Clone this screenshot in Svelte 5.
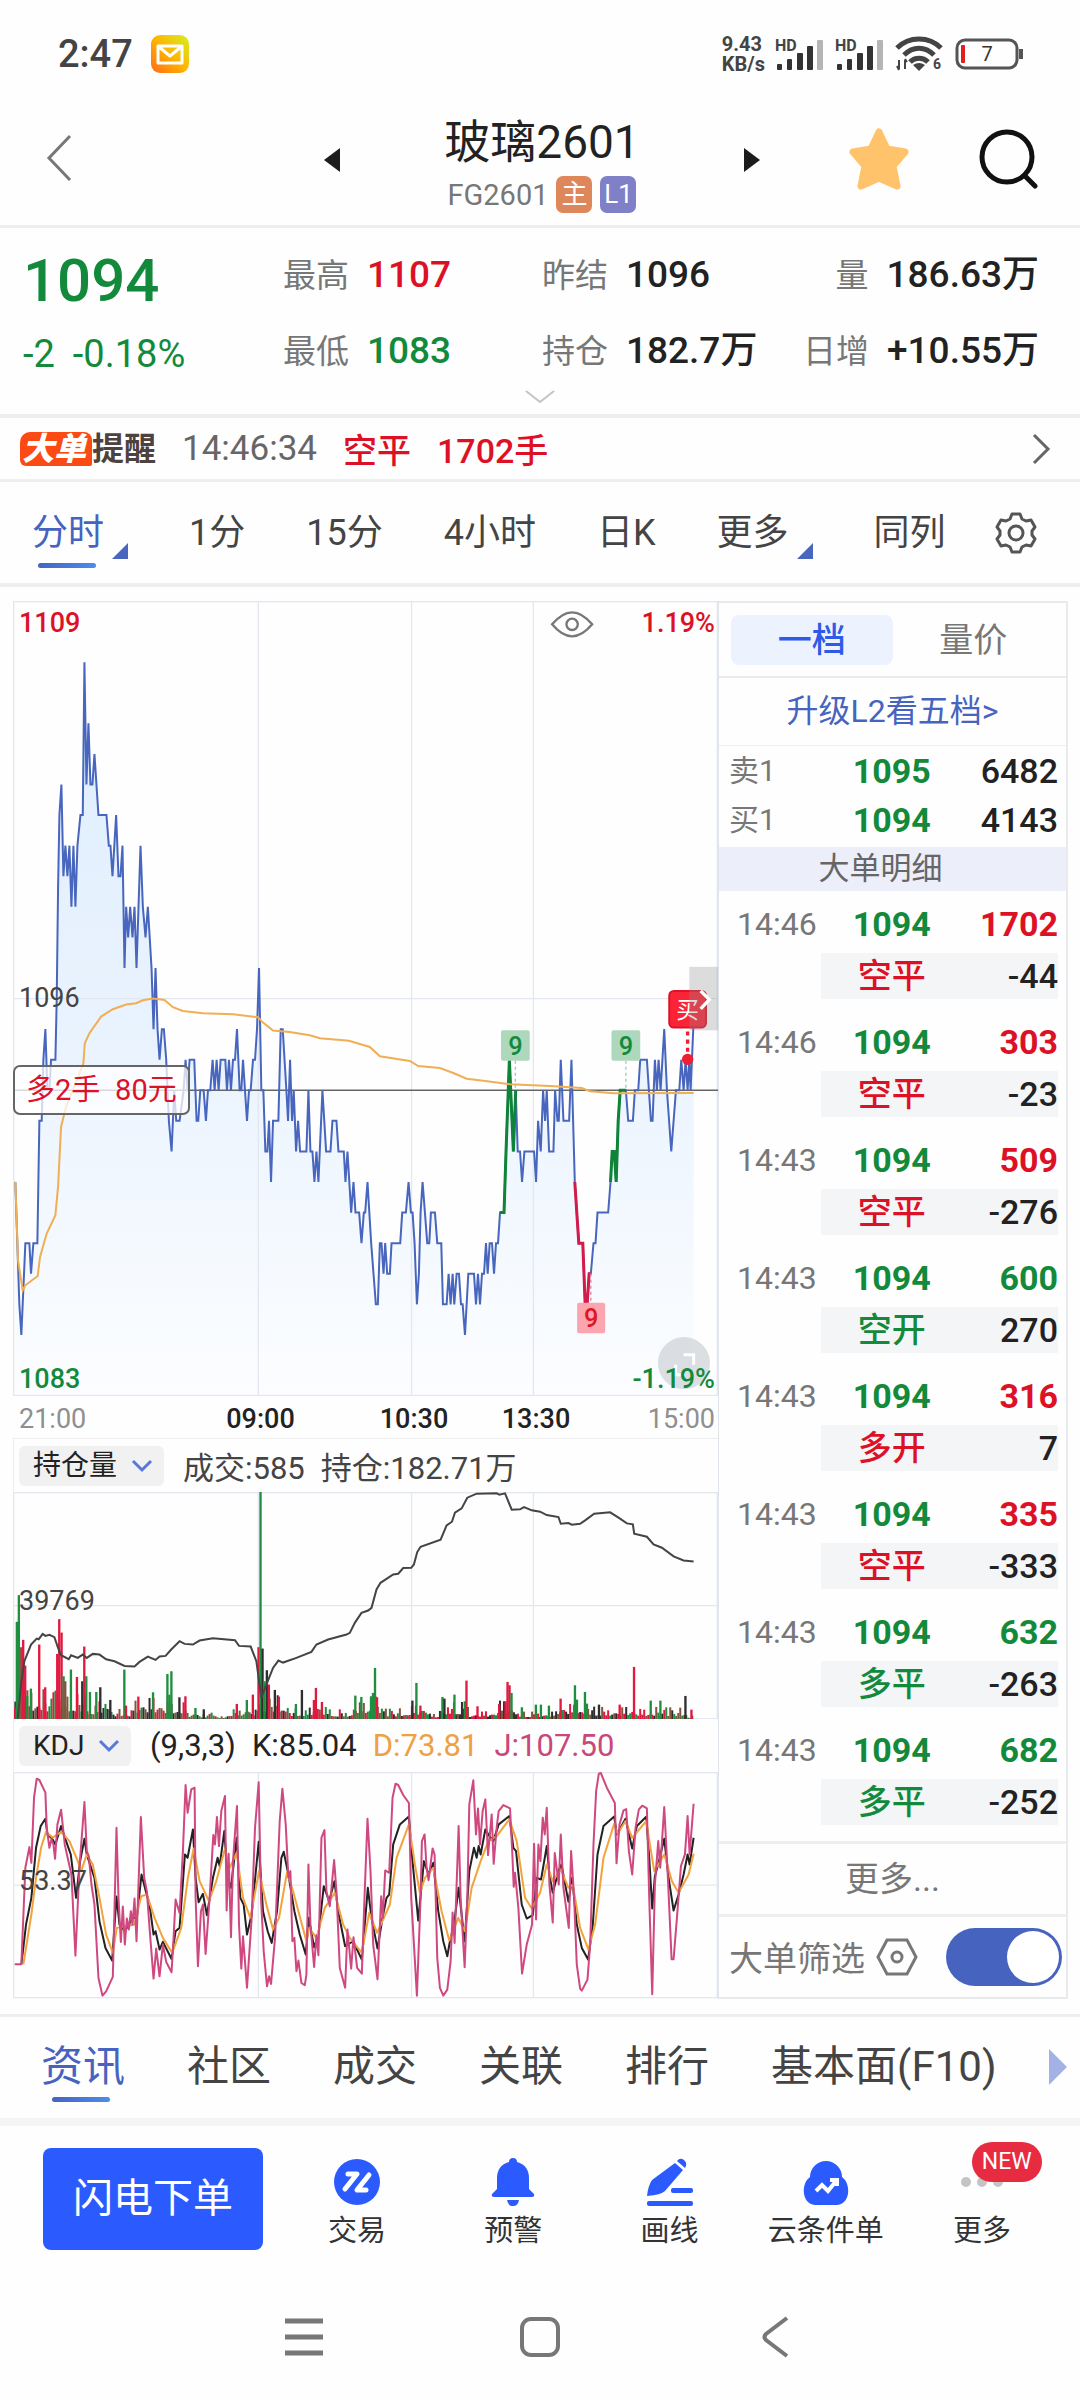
<script lang="ts">
	type Tone = 'up' | 'down';

	const periods = ['分时', '1分', '15分', '4小时', '日K', '更多', '同列'];
	const sections = ['资讯', '社区', '成交', '关联', '排行', '基本面(F10)'];

	let period = $state('分时');
	let section = $state('资讯');
	let bookTab = $state('一档');
	let bigOnly = $state(true);

	const book = [
		{ side: '卖1', price: 1095, volume: 6482 },
		{ side: '买1', price: 1094, volume: 4143 }
	];

	const trades: { time: string; volume: number; kind: string; change: number; tone: Tone }[] = [
		{ time: '14:46', volume: 1702, kind: '空平', change: -44, tone: 'up' },
		{ time: '14:46', volume: 303, kind: '空平', change: -23, tone: 'up' },
		{ time: '14:43', volume: 509, kind: '空平', change: -276, tone: 'up' },
		{ time: '14:43', volume: 600, kind: '空开', change: 270, tone: 'down' },
		{ time: '14:43', volume: 316, kind: '多开', change: 7, tone: 'up' },
		{ time: '14:43', volume: 335, kind: '空平', change: -333, tone: 'up' },
		{ time: '14:43', volume: 632, kind: '多平', change: -263, tone: 'down' },
		{ time: '14:43', volume: 682, kind: '多平', change: -252, tone: 'down' }
	];

	// Chart space is 3 units per css pixel. Each series comes in two halves,
	// the second one counted from x = HALF.
	const HALF = 1050;
	const BOTTOM = 2382;
	type Pt = [number, number];

	function parse(first: string, second: string): Pt[] {
		const read = (s: string, dx: number) =>
			s.trim().split(/\s+/).map((p) => {
				const [x, y] = p.split(',').map(Number);
				return [x + dx, y] as Pt;
			});
		return [...read(first, 0), ...read(second, HALF)];
	}

	const line = (pts: Pt[]) => pts.map(([x, y]) => `${x},${y}`).join(' ');
	const priceY = (p: number) => 1191 + (96 - p) * 91.6;

	// y = price - 1000
	const price: Pt[] = parse(
		`48,90 54,88 60,86 66,85 78,88 90,88 95,87 102,88 114,88 120,92 127,92 132,94 138,95 144,93 150,93 155,94 168,94
		172,96 176,99.6 180,102 186,103 192,100 198,101 204,100 210,101 216,99 222,101 228,99 234,101 243,102 250,102
		255,107 261,103 267,105 273,103 279,103 285,104 297,102 321,102 328,101 333,101 339,100 350,102 357,100 363,100
		369,101 375,97 380,99 386,98 392,99 399,98 405,99 411,97 417,99 423,101 430,99 438,98 445,99 456,97 462,95
		468,97 474,95 480,94 487,95 493,95 500,94 508,92 516,91 524,93 530,92 540,92 552,93 558,94 564,93 570,94 584,94
		591,92 596,92 602,93 612,93 619,92 625,93 632,93 639,94 645,93 651,94 657,93 663,94 677,94 682,93 688,94 694,93
		700,94 706,94 712,95 720,93 725,93 730,94 742,92 748,93 753,93 760,94 766,94 772,95 778,97 785,93 791,93 797,91
		803,91 808,92 814,90 820,92 836,92 843,95 849,95 860,93 865,92 871,94 877,92 882,93 889,91 895,92 901,91 920,91
		926,93 932,91 938,91 944,90 950,91 956,90 968,93 979,91 992,91 998,92 1010,92 1016,91 1032,91 1037,90 1043,91`,
		`4,89 11,90 17,89 28,89 35,88 42,89 46,89 53,90 64,88 78,86 84,86 90,88 95,88 101,87 106,88 112,87 120,87 125,88
		151,88 157,89 168,89 176,90 183,89 188,89 194,88 201,86 207,87 212,89 218,90 232,88 238,88 243,89 255,89 262,88
		274,88 279,86 290,86 296,87 302,86 308,87 313,86 320,87 327,87 333,86 338,86 345,85 355,87 372,87 378,86 384,87
		390,86 396,87 402,87 408,88 413,87 419,88 426,88 432,87 438,88 444,88 450,89 462,89 468,91 478,94 490,91 497,93
		503,91 510,91 516,90 523,91 552,91 558,90 564,92 572,91 579,93 585,92 590,93 597,91 610,91 615,93 622,92 626,92
		632,94 640,92 657,92 664,94 674,90 686,88 698,88 705,86 711,86 717,87 722,87 730,88 736,88 742,89 774,89 781,90
		786,91 792,91 798,90 804,92 810,93 827,93 834,92 848,92 854,93 864,93 870,94 890,94 902,92 907,92 914,94 920,93
		925,94 931,93 942,95 950,93 963,91 977,93 987,93 993,94 1000,93 1006,94 1012,93 1017,94 1021,93 1030,95.3`
	).map(([x, p]) => [x, priceY(p)]);

	const priceArea = `48,${BOTTOM} ${line(price)} 2080,${BOTTOM}`;
	const between = (a: number, b: number) => line(price.filter(([x]) => x >= a + HALF && x <= b + HALF));
	const streaks = [
		{ points: between(450, 497), color: '#0f8438' },
		{ points: between(674, 722), color: '#d21a4c' },
		{ points: between(781, 827), color: '#0f8438' }
	];

	const average = parse(
		`48,1740 56,1975 70,2065 78,2050 115,2022 122,1965 142,1895 168,1840 176,1755 185,1575 200,1515 240,1415 252,1385
		256,1325 270,1295 305,1245 340,1223 380,1209 410,1205 430,1196 460,1191 495,1195 520,1217 550,1228 610,1235
		700,1238 775,1247 790,1263 820,1287 870,1291 930,1301 960,1310 1040,1317`,
		`0,1318 60,1336 90,1364 180,1378 205,1393 270,1399 310,1414 350,1431 400,1437 480,1448 600,1453 695,1459 720,1469
		790,1475 1030,1474`
	);

	const openInterest = parse(
		`55,862 66,750 75,690 95,640 112,622 118,624 130,608 138,614 150,611 165,618 176,650 185,672 208,684 215,672
		235,680 250,670 262,680 280,668 300,670 320,684 345,690 375,704 405,706 420,692 445,676 468,686 480,676 498,674
		515,655 540,630 555,638 580,640 600,628 640,621 706,627 718,644 753,646 770,690 785,800 800,760 820,710 836,688
		850,694 890,680 935,662 950,640 985,625 1040,610`,
		`0,605 15,575 35,545 55,538 65,530 80,475 92,455 130,430 145,428 160,411 184,410 192,400 202,363 212,347 272,326
		290,283 306,272 315,245 335,232 352,200 380,188 440,187 448,191 465,187 485,236 510,235 522,228 545,238 570,242
		590,252 625,258 632,278 655,276 665,281 690,278 705,268 732,248 780,244 805,260 830,277 848,280 852,308 890,317
		910,340 935,350 970,376 1000,388 1030,391`
	);

	const lineJ = parse(
		`46,759 66,759 78,470 90,408 96,455 104,260 112,203 120,207 138,245 142,350 150,410 156,385 162,400 167,443
		174,340 185,296 196,400 208,455 216,490 228,733 240,470 255,273 262,420 268,435 276,520 285,580 297,800 309,853
		320,840 340,797 351,350 357,560 364,692 370,586 376,700 382,622 388,655 394,600 399,640 405,562 411,690 424,318
		434,500 442,540 450,650 462,802 470,712 480,795 490,700 500,752 516,783 522,680 528,565 540,605 550,420 558,222
		564,305 575,235 585,230 588,560 595,765 604,600 610,580 618,728 630,560 641,372 646,400 652,318 658,405 665,300
		676,255 681,598 687,428 694,678 700,450 712,285 718,640 725,772 730,675 742,829 756,620 766,350 777,214 784,560
		792,720 802,825 808,795 814,818 826,680 840,330 848,233 858,340 866,500 872,480 878,690 884,680 890,780 896,748
		905,815 915,822 920,790 926,460 932,640 943,767 950,672 956,732 965,380 974,357 980,540 990,585 1003,447
		1010,540 1020,770 1036,829 1043,655`,
		`4,772 11,678 22,770 36,787 44,560 53,323 62,480 70,700 83,804 94,555 99,620 106,478 118,485 128,260 137,218
		145,222 160,252 177,276 184,560 201,853 212,560 216,390 224,370 230,470 236,507 248,412 254,430 262,740 270,830
		280,853 292,835 302,750 308,604 314,695 326,345 332,560 344,768 352,560 358,280 370,208 378,370 384,292 390,400
		398,300 406,265 414,432 425,310 431,458 440,350 446,300 460,282 480,292 487,430 491,527 495,485 505,590 516,787
		530,700 546,640 552,398 558,625 565,400 571,450 578,320 584,370 590,290 598,520 608,634 614,426 626,520 632,370
		640,530 656,650 663,420 672,560 680,760 690,832 695,838 712,805 720,700 730,400 738,240 746,188 752,186 770,230
		794,276 799,456 808,340 820,298 828,294 836,420 846,490 856,350 866,295 876,284 890,292 897,560 906,849 914,520
		924,390 930,470 942,288 952,480 964,744 970,744 980,620 992,465 1004,430 1012,315 1018,430 1030,278`
	);

	const lineK = parse(
		`66,759 80,640 96,560 110,410 124,345 138,323 144,370 158,382 168,400 185,345 200,390 214,430 230,560 242,450
		255,383 262,430 285,500 300,630 318,710 338,748 351,556 360,640 376,660 400,620 412,620 426,490 440,545 450,580
		462,670 468,660 480,715 490,692 516,743 528,660 540,650 556,430 564,440 580,355 588,500 597,573 610,548 622,612
		640,500 654,440 660,465 674,360 684,500 694,530 711,380 722,560 732,580 742,670 756,610 777,392 790,600 804,660
		816,695 832,600 845,440 852,422 866,490 884,600 900,670 918,730 927,620 943,708 956,670 972,525 988,570
		1004,510 1015,600 1036,705`,
		`10,690 36,745 54,530 65,620 83,712 98,620 110,560 118,550 130,400 150,340 177,316 185,420 205,628 222,450
		236,490 250,455 265,600 280,690 292,735 300,690 312,640 326,530 344,690 358,480 372,410 380,440 386,405 392,430
		406,355 418,375 430,390 446,340 478,315 490,410 498,420 515,580 530,622 548,612 560,500 573,505 590,405 598,490
		608,545 625,480 634,460 655,572 666,500 680,640 695,710 714,745 728,640 742,430 760,345 792,316 800,370 826,323
		846,412 860,345 888,317 897,440 906,592 914,495 926,450 942,383 955,500 970,598 985,550 1000,490 1012,430
		1018,460 1030,380`
	);

	const lineD = parse(
		`72,759 96,610 110,500 125,410 140,362 160,380 185,362 210,390 235,450 245,480 262,430 280,460 300,560 320,670
		340,725 352,650 380,645 405,640 425,555 442,550 465,620 490,680 518,725 545,650 565,500 582,412 600,510 628,570
		650,510 676,412 690,470 711,425 730,560 752,620 778,480 800,580 820,655 838,620 862,482 880,540 920,690 928,650
		950,680 975,590 1005,545 1030,640`,
		`0,680 36,725 58,605 82,665 120,580 140,440 177,340 195,460 210,545 225,500 250,470 275,600 298,688 325,620
		345,660 365,530 392,450 415,390 440,375 478,325 500,390 525,560 545,592 570,545 590,460 608,510 632,475 655,530
		668,520 690,650 715,715 735,640 760,440 792,338 802,368 826,330 846,380 888,330 912,480 942,430 965,510 985,545
		1015,490 1030,428`
	);

	const barColor: Record<string, string> = { r: '#e0193f', g: '#1f8f3f', k: '#2e2e2e', b: '#80573f' };
	const BASE = 864;

	// [until x, typical height] for the small bars
	const levels: Pt[] = [
		[84, 150], [270, 95], [320, 60], [400, 36], [560, 70], [640, 22], [700, 12], [770, 45], [860, 90], [1000, 40],
		[1060, 30], [1150, 75], [1230, 34], [1290, 50], [1320, 20], [1410, 60], [1490, 26], [1550, 60], [1670, 26],
		[1780, 50], [1900, 44], [2060, 38], [2090, 16]
	];

	const tall = `48,828r 53,572g 59,492g 66,648b 72,626r 78,703r 84,795g 95,772g 120,640r 138,768r 174,668r 180,564r
		187,604r 193,735g 198,750b 215,715g 233,737r 249,750k 255,646r 261,735g 272,782g 291,782g 303,768k 333,806k
		375,715g 380,823r 417,796r 461,783g 504,728g 510,790g 516,720g 540,798k 558,795r 588,830g 613,834k 712,818r
		742,806g 760,790r 777,648r 783,183g 789,652k 795,750g 802,717k 808,760r 826,776k 838,796r 889,818g 907,776k
		943,806r 949,770r 967,812r 1067,793g 1085,797g 1114,795g 1120,785g 1126,710g 1132,798r 1238,808k 1250,755g
		1262,823r 1328,797g 1334,802k 1364,790g 1395,810g 1400,748r 1433,825r 1498,818r 1517,810r 1523,752r 1529,762r
		1535,785g 1566,828g 1608,820g 1623,820g 1647,823g 1682,802r 1725,762g 1731,805g 1755,782g 1761,817g 1797,820k
		1859,820r 1902,707r 1952,808g 1981,808g 2056,794k 2074,835r`
		.split(/\s+/)
		.map((s) => {
			const [x, rest] = s.split(',');
			return { x: Number(x), y: parseInt(rest), color: barColor[rest.slice(-1)] };
		});

	const small = Array.from({ length: 339 }, (_, i) => {
		const x = 48 + i * 6;
		const n = ((i * 7919 + 104729) * (i + 31)) % 997;
		const level = (levels.find(([until]) => x < until) ?? [0, 16])[1];
		return { x, y: BASE - Math.round(level * (0.25 + (n / 997) ** 2 * 0.75)), color: barColor['rgbkrrgkb'[n % 9]] };
	});

	const columns = [776, 1235, 1600];
</script>

{#snippet grid(top: number, height: number)}
	<g stroke="#e3e7f0" stroke-width="4" fill="none">
		{#each columns as x}
			<line x1={x} x2={x} y1={top} y2={top + height} />
		{/each}
		<line x1="41" x2="2153" y1={top + height / 2} y2={top + height / 2} />
		<rect x="43" y={top + 2} width="2108" height={height - 4} />
	</g>
{/snippet}

{#snippet signal()}
	<svg width="50" height="36" viewBox="0 0 50 36" aria-hidden="true">
		<text x="0" y="15" font-size="16" font-weight="700" fill="#444">HD</text>
		<g fill="#333">
			<rect x="2" y="28" width="5" height="6" rx="1" />
			<rect x="12" y="23" width="5" height="11" rx="1" />
			<rect x="22" y="17" width="6" height="17" rx="1" />
			<rect x="32" y="10" width="6" height="24" rx="1" />
		</g>
		<rect x="42" y="4" width="6" height="30" rx="1" fill="#b5b5b5" />
	</svg>
{/snippet}

{#snippet chevronDown()}
	<svg class="caret" width="22" height="14" viewBox="0 0 22 14" aria-hidden="true">
		<path d="M2 2l9 9 9-9" fill="none" stroke="#5a78d8" stroke-width="3" />
	</svg>
{/snippet}

<div class="app">
	<div class="status">
		<span class="clock">2:47</span>
		<svg width="38" height="38" viewBox="0 0 38 38" aria-hidden="true">
			<defs>
				<linearGradient id="mail" x1="0" y1="1" x2="1" y2="0">
					<stop offset="0" stop-color="#ff6a1a" />
					<stop offset="0.5" stop-color="#ffb400" />
					<stop offset="1" stop-color="#d4f024" />
				</linearGradient>
			</defs>
			<rect width="38" height="38" rx="9" fill="url(#mail)" />
			<path d="M7 11h24v17H7zM8 12l11 9 11-9" fill="none" stroke="#fff" stroke-width="3" stroke-linejoin="round" />
		</svg>
		<div class="system">
			<span class="speed"><span>9.43</span><span>KB/s</span></span>
			{@render signal()}
			{@render signal()}
			<svg width="50" height="38" viewBox="0 0 50 38" aria-hidden="true">
				<g fill="none" stroke="#444" stroke-width="5">
					<path d="M2 13C14 1 34 1 46 13" />
					<path d="M9 20c9-9 21-9 30 0" />
					<path d="M15 27c5-5 13-5 18 0" />
				</g>
				<path d="M18 30q6-4 12 0l-6 6z" fill="#444" />
				<path d="M4 25v9M10 34v-9M2 31l2 4M12 27l-2-3" stroke="#444" stroke-width="2" />
				<text x="38" y="34" font-size="14" font-weight="700" fill="#444">6</text>
			</svg>
			<svg width="70" height="32" viewBox="0 0 70 32" aria-hidden="true">
				<rect x="2" y="2" width="60" height="28" rx="8" fill="none" stroke="#555" stroke-width="3" />
				<rect x="6" y="7" width="4" height="18" rx="1" fill="#e02020" />
				<path d="M66 11v10" stroke="#555" stroke-width="4" />
				<text x="32" y="23" font-size="20" text-anchor="middle" fill="#333">7</text>
			</svg>
		</div>
	</div>

	<header>
		<button class="plain" aria-label="返回">
			<svg width="28" height="48" viewBox="0 0 28 48"><path d="M25 2L4 24l21 22" fill="none" stroke="#777" stroke-width="3" /></svg>
		</button>
		<div class="contract">
			<button class="plain" aria-label="上一个">
				<svg width="16" height="24" viewBox="0 0 16 24"><path d="M16 0v24L0 12z" fill="#1c1c1c" /></svg>
			</button>
			<div class="name">
				<h1>玻璃2601</h1>
				<p>FG2601 <span class="tag main">主</span><span class="tag level">L1</span></p>
			</div>
			<button class="plain" aria-label="下一个">
				<svg width="16" height="24" viewBox="0 0 16 24"><path d="M0 0v24l16-12z" fill="#1c1c1c" /></svg>
			</button>
		</div>
		<div class="actions">
			<button class="plain" aria-label="自选">
				<svg width="60" height="62" viewBox="0 0 60 62">
					<path d="M30 4l8 17 18 3-12 14 4 20-18-8-18 8 4-20L4 24l18-3z" fill="#ffc36b" stroke="#ffc36b" stroke-width="7" stroke-linejoin="round" />
				</svg>
			</button>
			<button class="plain" aria-label="搜索">
				<svg width="60" height="60" viewBox="0 0 60 60" fill="none" stroke="#111" stroke-width="5" stroke-linecap="round">
					<circle cx="28" cy="28" r="25" /><path d="M46 47l10 10" />
				</svg>
			</button>
		</div>
	</header>

	<section class="quote">
		<div class="figures">
			<strong class="last down">1094</strong>
			<div><span>最高</span><b class="up">1107</b></div>
			<div><span>昨结</span><b>1096</b></div>
			<div class="end"><span>量</span><b>186.63万</b></div>
			<div class="delta down"><span>-2</span><span>-0.18%</span></div>
			<div><span>最低</span><b class="down">1083</b></div>
			<div><span>持仓</span><b>182.7万</b></div>
			<div class="end"><span>日增</span><b>+10.55万</b></div>
		</div>
		<button class="plain expand" aria-label="展开">
			<svg width="30" height="16" viewBox="0 0 30 16"><path d="M1 2l14 11L29 2" fill="none" stroke="#c4c4c4" stroke-width="2" /></svg>
		</button>
	</section>

	<a class="alert" href="#alert">
		<span class="logo"><i>大单</i><em>提醒</em></span>
		<time>14:46:34</time>
		<b>空平</b>
		<b>1702手</b>
		<svg width="20" height="32" viewBox="0 0 20 32" aria-hidden="true"><path d="M2 2l14 14L2 30" fill="none" stroke="#666" stroke-width="3" /></svg>
	</a>

	<nav class="periods">
		{#each periods as name}
			<button
				class:active={period === name}
				class:more={name === '分时' || name === '更多'}
				onclick={() => (period = name)}>{name}</button
			>
		{/each}
		<button class="gear" aria-label="设置">
			<svg width="42" height="42" viewBox="0 0 42 42" fill="none" stroke="#555" stroke-width="3" stroke-linejoin="round">
				<path
					d="M17 2h8l2 5 4 2 5-1 4 7-3 4v4l3 4-4 7-5-1-4 2-2 5h-8l-2-5-4-2-5 1-4-7 3-4v-4l-3-4 4-7 5 1 4-2z"
				/>
				<circle cx="21" cy="21" r="7" />
			</svg>
		</button>
	</nav>

	<main>
		<div class="charts">
			<div class="plot">
				<svg viewBox="41 0 2112 2382" aria-label="分时图">
					<defs>
						<linearGradient id="fill" gradientUnits="userSpaceOnUse" x1="0" y1="200" x2="0" y2="2382">
							<stop offset="0" stop-color="#dfeefd" />
							<stop offset="0.5" stop-color="#e9f3fe" />
							<stop offset="1" stop-color="#fcfdff" />
						</linearGradient>
					</defs>
					<polygon points={priceArea} fill="url(#fill)" />
					{@render grid(0, 2382)}
					<line x1="41" x2="2153" y1={priceY(93)} y2={priceY(93)} stroke="#666" stroke-width="4" />
					<polyline points={line(price)} fill="none" stroke="#4866bd" stroke-width="6" />
					{#each streaks as s}
						<polyline points={s.points} fill="none" stroke={s.color} stroke-width="9" />
					{/each}
					<polyline points={line(average)} fill="none" stroke="#f0ae55" stroke-width="6" />

					<g stroke-width="4" stroke-dasharray="9 9">
						<path d="M1546 1377v90M1877 1377v90" stroke="#9fcbaf" />
						<path d="M1772 2015v88" stroke="#dd8297" />
					</g>
					<g font-size="76" text-anchor="middle" class="flag">
						<rect x="1503" y="1286" width="86" height="91" rx="6" fill="#aed8bb" />
						<text x="1546" y="1359" fill="#138a3b">9</text>
						<rect x="1834" y="1286" width="86" height="91" rx="6" fill="#aed8bb" />
						<text x="1877" y="1359" fill="#138a3b">9</text>
						<rect x="1731" y="2102" width="84" height="92" rx="6" fill="#fba5ae" />
						<text x="1773" y="2175" fill="#e01526">9</text>
					</g>

					<path d="M2062 1290v80" stroke="#f01e30" stroke-width="10" stroke-dasharray="12 12" />
					<circle cx="2062" cy="1373" r="17" fill="#f01e30" />
					<rect x="2007" y="1168" width="110" height="110" rx="14" fill="#fb2436" stroke="#dd1226" stroke-width="6" />
					<text x="2062" y="1249" font-size="68" text-anchor="middle" fill="#fff">买</text>
					<rect x="2067" y="1096" width="86" height="190" fill="#8f8f8f" opacity="0.3" />
					<path d="M2101 1168l26 26-26 28" fill="none" stroke="#fff" stroke-width="10" />

					<circle cx="2051" cy="2283" r="78" fill="#c9ced3" opacity="0.65" />
					<path d="M2050 2258h30v30M2026 2288v30h28" fill="none" stroke="#fff" stroke-width="9" />

					<g fill="none" stroke="#777" stroke-width="7">
						<path d="M1656 70q60-72 120 0q-60 72-120 0z" />
						<circle cx="1716" cy="70" r="17" />
					</g>
				</svg>
				<span class="tick top up">1109</span>
				<span class="tick top right up">1.19%</span>
				<span class="tick mid settle">1096</span>
				<span class="tick bottom down">1083</span>
				<span class="tick bottom right down">-1.19%</span>
				<span class="position">多2手&ensp;80元</span>
			</div>
			<div class="axis">
				<span>21:00</span><span class="session">09:00</span><span class="session">10:30</span><span class="session">13:30</span><span>15:00</span>
			</div>

			<div class="indicator">
				<label class="pick">
					<select aria-label="副图一"><option>持仓量</option></select>
					{@render chevronDown()}
				</label>
				<span class="soft">成交:585</span>
				<span class="soft">持仓:182.71万</span>
			</div>
			<div class="plot">
				<svg viewBox="41 183 2112 681" aria-label="成交量与持仓量">
					{@render grid(183, 681)}
					{#each small as bar}
						<rect x={bar.x - 3} y={bar.y} width="6" height={BASE - bar.y} fill={bar.color} />
					{/each}
					{#each tall as bar}
						<rect x={bar.x - 4} y={bar.y} width="7" height={BASE - bar.y} fill={bar.color} />
					{/each}
					<polyline points={line(openInterest)} fill="none" stroke="#444" stroke-width="6" />
				</svg>
				<span class="tick mid">39769</span>
			</div>

			<div class="indicator">
				<label class="pick">
					<select aria-label="副图二"><option>KDJ</option></select>
					{@render chevronDown()}
				</label>
				<span>(9,3,3)</span>
				<span>K:85.04</span>
				<span class="d">D:73.81</span>
				<span class="j">J:107.50</span>
			</div>
			<div class="plot">
				<svg viewBox="41 183 2112 678" aria-label="KDJ">
					{@render grid(183, 678)}
					<g fill="none" stroke-width="6" stroke-linejoin="round">
						<polyline points={line(lineK)} stroke="#222" />
						<polyline points={line(lineD)} stroke="#f2a33c" />
						<polyline points={line(lineJ)} stroke="#cf4880" />
					</g>
				</svg>
				<span class="tick mid">53.37</span>
			</div>
		</div>

		<aside>
			<div class="book-tabs">
				{#each ['一档', '量价'] as name}
					<button class:active={bookTab === name} onclick={() => (bookTab = name)}>{name}</button>
				{/each}
			</div>
			<a class="upgrade" href="#l2">升级L2看五档&gt;</a>
			<table class="book">
				<tbody>
					{#each book as row}
						<tr>
							<th scope="row">{row.side}</th>
							<td class="price down">{row.price}</td>
							<td class="number">{row.volume}</td>
						</tr>
					{/each}
				</tbody>
			</table>
			<h2>大单明细</h2>
			<table class="trades">
				<tbody>
					{#each trades as t}
						<tr>
							<th scope="row">{t.time}</th>
							<td class="price down">1094</td>
							<td class="number strong {t.tone}">{t.volume}</td>
						</tr>
						<tr class="detail">
							<td></td>
							<td class="kind {t.tone}">{t.kind}</td>
							<td class="number">{t.change}</td>
						</tr>
					{/each}
				</tbody>
			</table>
			<button class="load">更多...</button>
			<label class="filter">
				<span>大单筛选</span>
				<svg width="42" height="38" viewBox="0 0 42 38" fill="none" stroke="#777" stroke-width="3" aria-hidden="true">
					<path d="M11 2h20l9 17-9 17H11L2 19z" /><circle cx="21" cy="19" r="5" />
				</svg>
				<input type="checkbox" bind:checked={bigOnly} />
			</label>
		</aside>
	</main>

	<nav class="sections">
		{#each sections as name}
			<button class:active={section === name} onclick={() => (section = name)}>{name}</button>
		{/each}
		<svg width="18" height="36" viewBox="0 0 18 36" aria-hidden="true"><path d="M0 0l18 18L0 36z" fill="#a3b1e4" /></svg>
	</nav>

	<footer>
		<button class="order">闪电下单</button>
		<div class="tools">
			<button>
				<svg width="48" height="48" viewBox="0 0 48 48">
					<circle cx="24" cy="24" r="23" fill="#2b5bff" />
					<path d="M15 16h9L12 31M36 17L24 32h9" fill="none" stroke="#fff" stroke-width="5" stroke-linejoin="round" stroke-linecap="round" />
				</svg>
				交易
			</button>
			<button>
				<svg width="48" height="48" viewBox="0 0 48 48" fill="#2b5bff">
					<path d="M24 0c3 0 4 2 4 4 8 2 12 8 12 16v11l5 5q1 3-2 3H5q-3 0-2-3l5-5V20C8 12 12 6 20 4c0-2 1-4 4-4z" />
					<path d="M18 42h12q-1 6-6 6t-6-6z" />
				</svg>
				预警
			</button>
			<button>
				<svg width="48" height="48" viewBox="0 0 48 48" fill="#2b5bff">
					<path d="M29 5l8 7-18 21q-4 4-18 5 1-10 5-16zM31 3q3-4 7-1t1 8z" />
					<rect x="25" y="30" width="22" height="5" rx="2" />
					<rect x="1" y="43" width="46" height="5" rx="2" />
				</svg>
				画线
			</button>
			<button>
				<svg width="48" height="48" viewBox="0 0 48 48">
					<path d="M8 19a16 16 0 0 1 32 0c9 6 9 27-5 28H13C-1 46-1 25 8 19z" fill="#2b5bff" />
					<path d="M14 33l6-6 6 6 8-10M28 22h7v6" fill="none" stroke="#fff" stroke-width="4" />
				</svg>
				云条件单
			</button>
			<button class="extra">
				<svg width="48" height="48" viewBox="0 0 48 48" fill="#c4c4c4">
					<circle cx="8" cy="24" r="5" /><circle cx="24" cy="24" r="5" /><circle cx="40" cy="24" r="5" />
				</svg>
				更多
				<span class="badge">NEW</span>
			</button>
		</div>
	</footer>

	<div class="system-nav">
		<button class="plain" aria-label="最近任务">
			<svg width="42" height="42" viewBox="0 0 42 42"><path d="M2 5h38M2 21h38M2 37h38" stroke="#777" stroke-width="5" /></svg>
		</button>
		<button class="plain" aria-label="主页">
			<svg width="42" height="42" viewBox="0 0 42 42"><rect x="3" y="3" width="36" height="36" rx="9" fill="none" stroke="#777" stroke-width="4" /></svg>
		</button>
		<button class="plain" aria-label="后退">
			<svg width="42" height="42" viewBox="0 0 42 42"><path d="M32 2L11 18q-3 3 0 6l21 16" fill="none" stroke="#777" stroke-width="4" /></svg>
		</button>
	</div>
</div>

<style>
	:global(body) {
		margin: 0;
		background: #fefefe;
	}

	.app {
		font-family: Roboto, 'Noto Sans CJK SC', sans-serif;
		color: #222;
	}

	.app * {
		box-sizing: border-box;
	}

	button,
	select {
		font: inherit;
		color: inherit;
		border: 0;
		background: none;
		padding: 0;
	}

	svg {
		display: block;
		flex: none;
	}

	h1,
	h2,
	p {
		margin: 0;
		font-weight: 400;
	}

	a {
		text-decoration: none;
	}

	.plain {
		display: flex;
		align-items: center;
	}

	.up {
		color: #dd1126;
	}

	.down {
		color: #138a3b;
	}

	.status {
		display: flex;
		align-items: center;
		gap: 18px;
		height: 100px;
		padding: 8px 55px 0 58px;
	}

	.clock {
		font-size: 38px;
		font-weight: 500;
		color: #444;
	}

	.system {
		display: flex;
		align-items: center;
		gap: 10px;
		margin-left: auto;
	}

	.speed {
		display: flex;
		flex-direction: column;
		font-size: 20px;
		line-height: 20px;
		font-weight: 700;
		color: #444;
	}

	header {
		display: grid;
		grid-template-columns: 1fr 436px 1fr;
		align-items: center;
		height: 128px;
		padding: 0 41px 0 45px;
		border-bottom: 3px solid #eee;
	}

	header > .plain {
		padding-bottom: 10px;
	}

	.contract {
		display: flex;
		align-items: center;
		justify-content: space-between;
	}

	.contract > .plain {
		padding-bottom: 6px;
	}

	.name {
		text-align: center;
	}

	.name h1 {
		padding-top: 4px;
		font-size: 46px;
		line-height: 60px;
	}

	.name p {
		display: flex;
		align-items: center;
		justify-content: center;
		gap: 8px;
		height: 46px;
		font-size: 29px;
		color: #777;
	}

	.tag {
		width: 36px;
		border-radius: 7px;
		font-size: 26px;
		line-height: 37px;
		text-align: center;
		color: #fff;
	}

	.main {
		background: #dd875a;
	}

	.level {
		background: #8080c8;
	}

	.actions {
		display: flex;
		justify-content: flex-end;
		gap: 70px;
		padding-bottom: 8px;
	}

	.quote {
		padding-top: 9px;
		height: 190px;
		border-bottom: 4px solid #eee;
	}

	.figures {
		display: grid;
		grid-template-columns: 260px 259px 1fr auto;
		grid-auto-rows: 76px;
		align-items: center;
		padding: 0 41px 0 23px;
	}

	.figures div {
		display: flex;
		align-items: baseline;
		gap: 18px;
		font-size: 33px;
		line-height: 50px;
		color: #777;
	}

	.figures .end {
		justify-content: flex-end;
	}

	.figures b {
		font-size: 37px;
		font-weight: 500;
		color: #222;
	}

	.figures b.up {
		color: #dd1126;
	}

	.figures b.down,
	.figures .delta {
		color: #138a3b;
	}

	.figures .delta {
		gap: 18px;
		padding-top: 6px;
		font-size: 38px;
	}

	.last {
		padding-top: 10px;
		font-size: 60px;
		font-weight: 500;
	}

	.expand {
		margin: 0 auto;
	}

	.alert {
		display: flex;
		align-items: center;
		gap: 26px;
		height: 64px;
		padding: 0 28px 0 20px;
		border-bottom: 3px solid #eee;
		font-size: 34px;
		color: #666;
	}

	.alert time {
		font-size: 35px;
	}

	.alert b {
		font-weight: 500;
		color: #dd1126;
	}

	.alert svg {
		margin-left: auto;
	}

	.logo {
		display: flex;
		font-size: 32px;
		line-height: 34px;
		font-weight: 900;
	}

	.logo i {
		width: 72px;
		padding-left: 2px;
		border-radius: 10px 8px 2px 6px;
		background: #fb4a14;
		color: #fff;
	}

	.logo em {
		font-weight: 700;
		font-style: normal;
		color: #4d423d;
	}

	.periods {
		display: flex;
		align-items: center;
		height: 105px;
		padding: 0 43px 0 32px;
		border-bottom: 4px solid #eee;
		font-size: 36px;
		color: #444;
	}

	.periods button {
		position: relative;
		line-height: 70px;
		white-space: nowrap;
	}

	.periods button + button {
		margin-left: 61px;
	}

	.periods .more {
		padding-right: 24px;
	}

	.periods .more::before {
		content: '';
		position: absolute;
		right: 0;
		bottom: 9px;
		border: 8px solid;
		border-color: transparent #4866bd #4866bd transparent;
	}

	.periods .active,
	.sections .active {
		color: #4763c0;
	}

	.active::after {
		border-radius: 3px;
		background: linear-gradient(90deg, #4763c0, #4b8cf0);
	}

	.periods .active::after {
		content: '';
		position: absolute;
		left: 6px;
		bottom: 0;
		width: 58px;
		height: 5px;
	}

	.periods button.gear {
		margin-left: auto;
	}

	main {
		display: grid;
		grid-template-columns: 706fr 349fr;
		margin: 14px 12px 0 13px;
	}

	.charts {
		border-right: 1px solid #dfe3ea;
	}

	.plot {
		position: relative;
	}

	.plot svg {
		width: 100%;
		height: auto;
	}

	.flag {
		font-weight: 500;
	}

	.tick {
		position: absolute;
		left: 6px;
		font-size: 27px;
		line-height: 32px;
		font-weight: 500;
	}

	.tick.right {
		left: auto;
		right: 3px;
	}

	.tick.top {
		top: 6px;
	}

	.tick.bottom {
		bottom: 1px;
	}

	.tick.mid {
		bottom: 45%;
		font-weight: 400;
		color: #444;
	}

	.tick.settle {
		bottom: 48%;
	}

	.position {
		position: absolute;
		left: 0;
		top: 58%;
		margin-top: 3px;
		padding: 0 11px;
		border: 2px solid #666;
		border-radius: 7px;
		background: rgb(255 255 255 / 0.75);
		font-size: 29px;
		line-height: 46px;
		color: #dd1126;
	}

	.axis {
		display: grid;
		grid-template-columns: 170px 143px 164px 80px 1fr;
		align-items: center;
		height: 43px;
		padding: 4px 3px 0 6px;
		border-bottom: 1px solid #eee;
		font-size: 27px;
		color: #8f8f8f;
		text-align: center;
	}

	.axis span:first-child {
		text-align: left;
	}

	.axis span:last-child {
		text-align: right;
	}

	.axis .session {
		font-weight: 500;
		color: #222;
	}

	.indicator {
		display: flex;
		align-items: center;
		gap: 16px;
		height: 53px;
		padding: 0 5px;
		border-left: 1px solid #eee;
		font-size: 31px;
		white-space: nowrap;
	}

	.pick {
		position: relative;
		margin-right: 3px;
		border-radius: 6px;
		background: #f1f1f2;
		font-size: 28px;
	}

	.pick select {
		display: block;
		appearance: none;
		height: 40px;
		padding: 0 46px 0 14px;
	}

	.caret {
		position: absolute;
		right: 11px;
		top: 13px;
		pointer-events: none;
	}

	.soft {
		color: #444;
	}

	.d {
		color: #eea143;
	}

	.j {
		color: #c8487c;
	}

	aside {
		display: flex;
		flex-direction: column;
		border: 2px solid #e8eaec;
		border-left: 0;
	}

	.book-tabs {
		display: flex;
		align-items: center;
		height: 75px;
		padding: 0 12px;
		border-bottom: 2px solid #e8eaec;
		font-size: 34px;
		color: #777;
	}

	.book-tabs button {
		flex: 1;
		line-height: 50px;
		border-radius: 8px;
	}

	.book-tabs .active {
		background: #edf2ff;
		font-weight: 500;
		color: #2f5ae8;
	}

	.book-tabs .active::after {
		content: none;
	}

	.upgrade {
		height: 68px;
		border-bottom: 1px solid #eee;
		font-size: 32px;
		line-height: 67px;
		text-align: center;
		color: #4763c0;
	}

	table {
		table-layout: fixed;
		width: calc(100% - 18px);
		margin: 0 8px 0 10px;
		border-spacing: 0;
	}

	th,
	td {
		padding: 0;
		font-size: 34px;
		line-height: 46px;
		font-weight: 500;
	}

	th {
		width: 28%;
		font-size: 32px;
		font-weight: 400;
		text-align: left;
		color: #777;
	}

	.price {
		width: 43%;
		font-weight: 700;
		text-align: center;
	}

	.number {
		width: 29%;
		text-align: right;
	}

	.strong {
		font-weight: 700;
	}

	.book tr {
		height: 49px;
	}

	.book th {
		font-size: 30px;
	}

	.book {
		margin-bottom: 3px;
	}

	h2 {
		padding-right: 24px;
		background: #eceefa;
		font-size: 31px;
		line-height: 44px;
		text-align: center;
		color: #666;
	}

	.trades {
		margin-bottom: 6px;
	}

	.trades tr {
		height: 62px;
	}

	.trades tr:not(.detail) > * {
		padding-top: 4px;
	}

	.trades th {
		padding-left: 8px;
	}

	.trades .detail {
		height: 56px;
	}

	.detail td {
		border-bottom: 10px solid transparent;
	}

	.detail td + td {
		background: #f4f5f7;
		background-clip: padding-box;
	}

	.kind {
		font-size: 34px;
		text-align: center;
	}

	.load {
		height: 73px;
		padding-bottom: 6px;
		border-top: 3px solid #eee;
		font-size: 34px;
		color: #777;
	}

	.filter {
		display: flex;
		align-items: center;
		gap: 11px;
		flex: 1;
		padding: 0 4px 0 10px;
		border-top: 3px solid #eee;
		font-size: 34px;
		white-space: nowrap;
		color: #777;
	}

	.filter input {
		appearance: none;
		display: flex;
		width: 116px;
		height: 58px;
		margin: 0 0 0 auto;
		padding: 3px;
		border-radius: 29px;
		background: #c8c8c8;
	}

	.filter input::before {
		content: '';
		width: 52px;
		height: 52px;
		border-radius: 50%;
		background: #fff;
	}

	.filter input:checked {
		justify-content: flex-end;
		background: #4763c0;
	}

	.sections {
		display: flex;
		align-items: center;
		margin-top: 15px;
		height: 112px;
		padding: 0 13px 0 41px;
		border-top: 3px solid #eee;
		border-bottom: 8px solid #f5f5f5;
		font-size: 42px;
		color: #444;
	}

	.sections button {
		position: relative;
		line-height: 70px;
		white-space: nowrap;
	}

	.sections button + button {
		margin-left: 62px;
	}

	.sections .active::after {
		content: '';
		position: absolute;
		left: 11px;
		bottom: 0;
		width: 58px;
		height: 5px;
	}

	.sections svg {
		margin-left: auto;
	}

	footer {
		display: flex;
		align-items: center;
		gap: 16px;
		height: 146px;
		padding: 0 20px 0 43px;
	}

	.order {
		width: 220px;
		border-radius: 8px;
		background: #2b5bff;
		font-size: 40px;
		line-height: 102px;
		color: #fff;
	}

	.tools {
		display: flex;
		flex: 1;
		padding-top: 12px;
	}

	.tools button {
		position: relative;
		display: flex;
		flex: 1;
		flex-direction: column;
		align-items: center;
		gap: 5px;
		font-size: 29px;
		line-height: 40px;
		white-space: nowrap;
		color: #333;
	}

	.badge {
		position: absolute;
		top: -16px;
		left: 68px;
		padding: 0 10px;
		border-radius: 20px;
		background: #e72b41;
		font-size: 23px;
		color: #fff;
	}

	.system-nav {
		display: flex;
		justify-content: center;
		gap: 194px;
		padding: 44px 0 42px;
	}
</style>
